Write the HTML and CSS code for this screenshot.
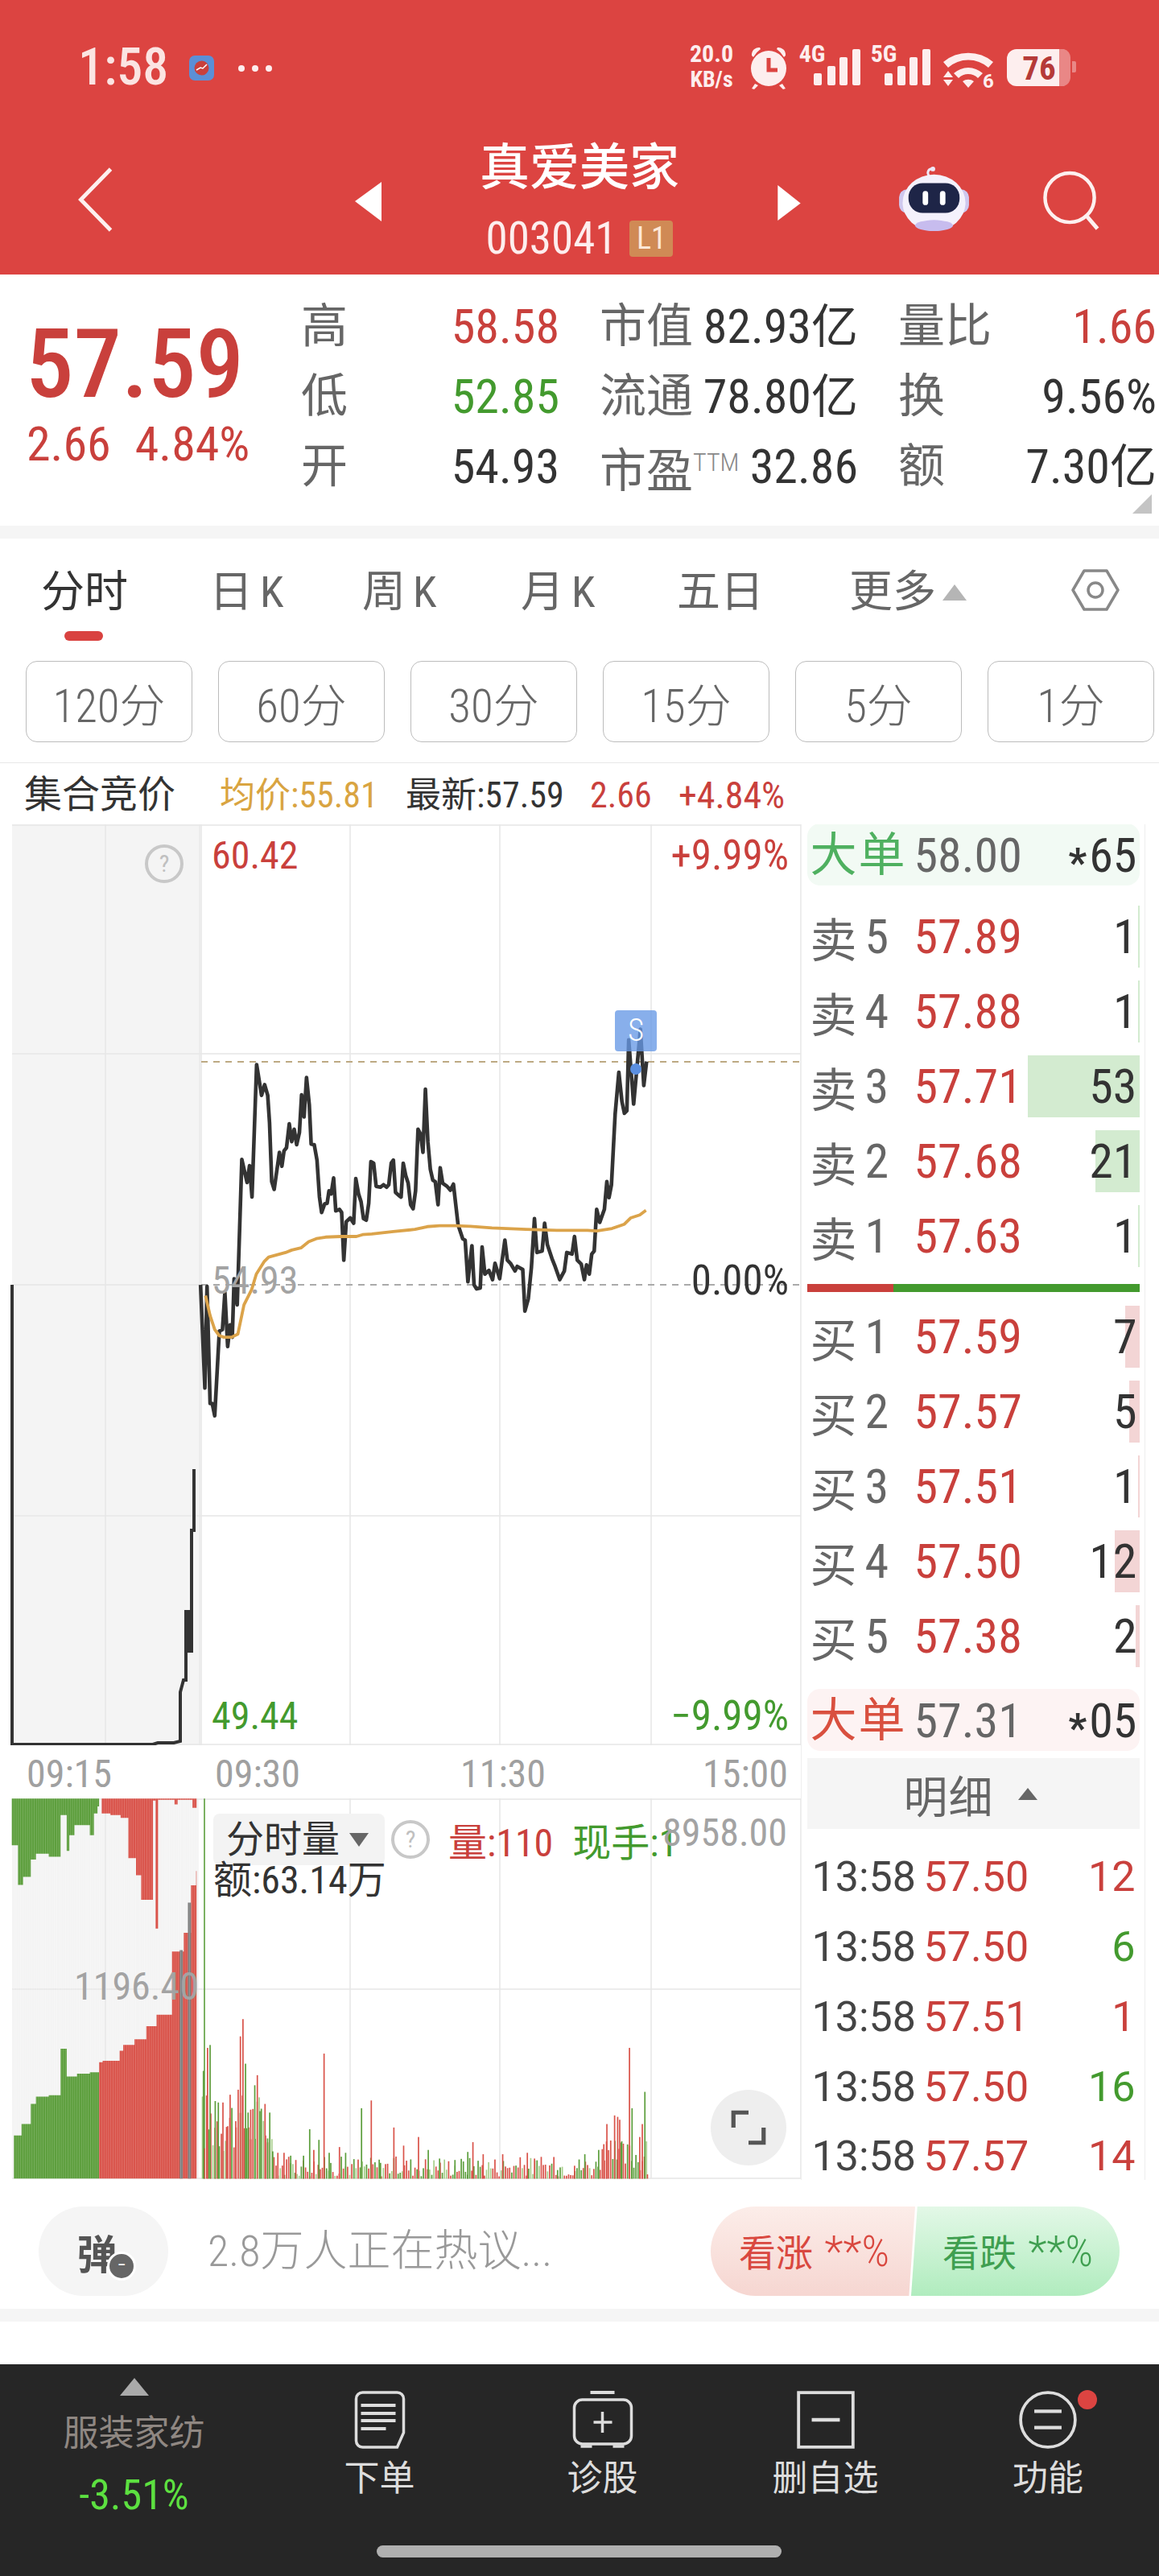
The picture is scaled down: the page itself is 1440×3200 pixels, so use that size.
FILE: index.html
```html
<!DOCTYPE html>
<html lang="zh-CN">
<head>
<meta charset="utf-8">
<title>真爱美家</title>
<link rel="stylesheet" href="styles.css">
</head>
<body>
<div class="page">
  <header class="top">
    <div class="status">
      <span class="clock">1:58</span>
      <svg class="app-dot" viewBox="0 0 31 31"><rect width="31" height="31" rx="7" fill="#5b8fd6"/><circle cx="15.5" cy="15.5" r="9" fill="#c9403c"/><path d="M9 18l5-3 3 1 5-5" stroke="#fff" fill="none" stroke-width="1.5"/></svg>
      <span class="more"><i></i><i></i><i></i></span>
      <svg class="status-icons" viewBox="850 50 490 66">
        <g fill="#fdeeee">
          <text x="884" y="77" class="st-a" text-anchor="middle">20.0</text>
          <text x="884" y="108" class="st-b" text-anchor="middle">KB/s</text>
          <circle cx="955" cy="85" r="22"/>
          <path d="M934 69a9 9 0 0 1 10-10l1 2a30 30 0 0 0-9 10zM976 69a9 9 0 0 0-10-10l-1 2a30 30 0 0 1 9 10z"/>
          <path d="M938 104l-4 6 3 1 5-5zM972 104l4 6-3 1-5-5z"/>
          <text x="1009" y="77" class="st-a" text-anchor="middle">4G</text>
          <rect x="1011" y="91" width="10" height="15" rx="2"/><rect x="1028" y="82" width="10" height="24" rx="2"/><rect x="1043" y="71" width="10" height="35" rx="2"/><rect x="1059" y="61" width="10" height="45" rx="2"/>
          <text x="1098" y="77" class="st-a" text-anchor="middle">5G</text>
          <rect x="1099" y="91" width="10" height="15" rx="2"/><rect x="1115" y="82" width="10" height="24" rx="2"/><rect x="1130" y="71" width="10" height="35" rx="2"/><rect x="1146" y="61" width="10" height="45" rx="2"/>
          <path d="M1172 77a48 48 0 0 1 62 0l-6 7a38 38 0 0 0-50 0zM1185 91a27 27 0 0 1 36 0l-6 6a17 17 0 0 0-24 0zM1196 101a12 12 0 0 1 14 0l-7 8z"/>
          <path d="M1178 88l6 8h-12zM1178 107l6-8h-12z"/>
          <text x="1228" y="109" class="st-d" text-anchor="middle">6</text>
          <path d="M1316 61h6a12 12 0 0 1 8 10v26a12 12 0 0 1-8 10h-6z" opacity=".4"/>
          <path d="M1332 76h3a2 2 0 0 1 2 2v10a2 2 0 0 1-2 2h-3z" opacity=".4"/>
          <path d="M1263 61h53v46h-53a12 12 0 0 1-12-12V73a12 12 0 0 1 12-12z"/>
        </g>
        <path d="M955 72v15h11" stroke="#dc4441" stroke-width="5" fill="none"/>
        <text x="1291" y="99" class="st-c" text-anchor="middle">76</text>
      </svg>
    </div>
    <nav class="navbar">
      <svg class="back" viewBox="0 0 44 82"><path d="M42 2L4 41l38 39" fill="none" stroke="#fdf0ef" stroke-width="5"/></svg>
      <svg class="tri tri-l" viewBox="0 0 33 49"><path d="M33 0v49L0 24z" fill="#fff"/></svg>
      <div class="title">
        <div class="name">真爱美家</div>
        <div class="code"><span>003041</span><b class="lvl">L1</b></div>
      </div>
      <svg class="tri tri-r" viewBox="0 0 29 45"><path d="M0 0v45l29-22z" fill="#fff"/></svg>
      <svg class="robot" viewBox="0 0 89 84">
        <path d="M39 14c-5-6-1-11 4-10" fill="none" stroke="#efe9f8" stroke-width="3"/>
        <circle cx="43" cy="4" r="3" fill="#efe9f8"/>
        <rect x="0" y="30" width="89" height="30" rx="10" fill="#cfc8ee"/>
        <ellipse cx="44.500" cy="47" rx="40" ry="36" fill="#f4f1fc"/>
        <ellipse cx="44.500" cy="76" rx="24" ry="7" fill="#c7bcee"/>
        <rect x="12" y="22" width="65" height="38" rx="18" fill="#1e2547"/>
        <rect x="30" y="32" width="7" height="18" rx="3.500" fill="#fff"/>
        <rect x="52" y="32" width="7" height="18" rx="3.500" fill="#fff"/>
      </svg>
      <svg class="search" viewBox="0 0 73 75"><circle cx="34" cy="34" r="31" fill="none" stroke="#fdf0ef" stroke-width="4.500"/><path d="M56 58l13 15" stroke="#fdf0ef" stroke-width="5"/></svg>
    </nav>
  </header>

  <section class="info">
    <div class="last">
      <div class="last-big">57.59</div>
      <div class="last-sub"><span>2.66</span><span>4.84%</span></div>
    </div>
    <div class="stats">
      <div class="cell"><span class="lab">高</span><span class="val red">58.58</span></div>
      <div class="cell"><span class="lab">市值</span><span class="val">82.93<i>亿</i></span></div>
      <div class="cell"><span class="lab">量比</span><span class="val red">1.66</span></div>
      <div class="cell"><span class="lab">低</span><span class="val green">52.85</span></div>
      <div class="cell"><span class="lab">流通</span><span class="val">78.80<i>亿</i></span></div>
      <div class="cell"><span class="lab">换</span><span class="val">9.56%</span></div>
      <div class="cell"><span class="lab">开</span><span class="val">54.93</span></div>
      <div class="cell"><span class="lab">市盈<small>TTM</small></span><span class="val">32.86</span></div>
      <div class="cell"><span class="lab">额</span><span class="val">7.30<i>亿</i></span></div>
    </div>
    <div class="corner"></div>
  </section>
  <div class="strip"></div>

  <section class="tabs">
    <div class="tab active">分时</div>
    <div class="tab tab-k">日K</div>
    <div class="tab tab-k">周K</div>
    <div class="tab tab-k">月K</div>
    <div class="tab">五日</div>
    <div class="tab">更多<em class="up"></em></div>
    <svg class="hex" viewBox="0 0 60 54"><path d="M16 3h28l14 24-14 24H16L2 27z" fill="none" stroke="#888" stroke-width="3.500" stroke-linejoin="round"/><circle cx="30" cy="27" r="9" fill="none" stroke="#888" stroke-width="3.500"/></svg>
  </section>

  <section class="periods">
    <div class="period">120分</div>
    <div class="period">60分</div>
    <div class="period">30分</div>
    <div class="period">15分</div>
    <div class="period">5分</div>
    <div class="period">1分</div>
  </section>

  <section class="quote">
    <span class="q-title">集合竞价</span>
    <span class="q-avg">均价:55.81</span>
    <span class="q-new">最新:57.59</span>
    <span class="red">2.66</span>
    <span class="red q-pct">+4.84%</span>
  </section>

  <section class="main">
    <div class="charts">
      <div class="price">
        <svg class="fill" viewBox="0 1024 995 1144">
          <rect x="15" y="1024" width="232" height="1144" fill="#f4f4f4"/>
          <rect x="247" y="1024" width="4" height="1144" fill="#ececec"/>
          <g stroke="#e6e6e6" stroke-width="1.500">
            <path d="M15 1025H995M15 1309H995M15 1883H995M15 2167H995"/>
            <path d="M15 1596H248"/>
            <path d="M131 1024V2168M435 1024V2168M621 1024V2168M809 1024V2168M995 1024V2168"/>
          </g>
          <path d="M250 1319H995" stroke="#bda983" stroke-width="2" stroke-dasharray="8 7"/>
          <path d="M250 1596H995" stroke="#aaa" stroke-width="2" stroke-dasharray="8 7"/>
          <path d="M15 1596V2167H190L196 2165H216L224 2163V2102L228 2087H231V2002H234V2051H235V2002H237V2051H238V1901H241V1825" fill="none" stroke="#333" stroke-width="4"/>
          <g transform="translate(240 1200) scale(.3827)" fill="none" stroke-linejoin="round">
            <polyline stroke="#333" stroke-width="12" points="24,1035 38,1370 45,1040 55,1420 62,1420 70,1460 85,1185 95,1180 103,1060 112,1235 120,1165 127,1205 133,1015 143,1100 158,628 175,703 183,648 191,750 206,320 222,420 232,385 242,420 248,510 255,700 263,725 280,605 288,650 295,600 303,590 312,512 320,570 328,530 336,580 345,540 352,418 360,490 368,362 377,450 383,578 393,580 402,630 410,750 417,800 427,772 435,770 441,730 448,740 456,688 463,795 475,790 482,800 489,955 497,830 510,818 521,835 528,690 537,740 545,765 553,820 562,825 570,770 577,635 586,640 594,715 608,718 618,710 628,718 635,710 643,640 650,630 657,735 668,745 675,750 682,640 690,680 698,705 706,775 714,788 722,730 730,530 738,545 746,605 754,400 762,570 770,660 778,695 786,700 795,775 802,655 810,705 824,715 835,728 845,708 852,770 860,840 875,885 883,890 892,1025 905,908 912,1035 920,1048 932,1045 938,912 947,1000 960,988 972,1018 980,965 995,1015 1012,890 1020,955 1030,965 1045,990 1052,975 1070,985 1077,1120 1088,1080 1098,980 1108,820 1116,930 1133,925 1141,835 1150,905 1165,950 1175,975 1190,1018 1205,990 1213,930 1230,935 1238,878 1247,955 1260,968 1270,1018 1277,970 1286,1000 1294,935 1302,925 1310,790 1320,832 1335,790 1343,700 1350,752 1358,710 1370,480 1382,345 1392,440 1400,478 1408,470 1414,240 1430,448 1452,205 1463,388 1472,310"/>
            <polyline stroke="#dba34a" stroke-width="10" points="40,1070 55,1135 70,1180 85,1200 100,1205 125,1205 145,1195 165,1100 190,1050 205,1000 230,960 245,945 300,930 320,922 350,915 375,895 400,885 430,880 480,878 530,878 550,872 580,870 650,862 720,855 760,846 800,843 850,843 900,845 970,850 1080,855 1180,858 1280,858 1310,860 1360,852 1400,838 1420,818 1450,808 1470,793"/>
          </g>
          <circle cx="790" cy="1328" r="7" fill="#5b8fe0"/>
        </svg>
        <span class="mark">S</span>
        <span class="help help-a">?</span>
        <span class="lbl l-high red">60.42</span>
        <span class="lbl r-high red">+9.99%</span>
        <span class="lbl l-mid grey">54.93</span>
        <span class="lbl r-mid">0.00%</span>
        <span class="lbl l-low green">49.44</span>
        <span class="lbl r-low green">−9.99%</span>
      </div>
      <div class="axis"><span>09:15</span><span>09:30</span><span>11:30</span><span>15:00</span></div>
      <div class="volume">
        <svg class="fill" id="volsvg" viewBox="0 2234 995 474">
          <defs>
            <pattern id="stripes" width="2.800" height="10" patternUnits="userSpaceOnUse"><rect width=".8" height="10" fill="#fff" opacity=".2"/></pattern>
          </defs>
          <rect x="15" y="2234" width="232" height="472" fill="#f4f4f4"/>
          <g stroke="#e6e6e6" stroke-width="1.500">
            <path d="M15 2235H995M15 2471H995M15 2706H995"/>
            <path d="M131 2234V2706M435 2234V2706M621 2234V2706M809 2234V2706M995 2234V2706"/>
          </g>
          <g transform="translate(0 2160) scale(.6378 .3571)">
            <path fill="#5c9e3c" d="M23 208V370H35V508H45V480H60V420H70V400H95V410H118V265H130V390H135V335H145V300H175V335H183V260H190V235H193V208ZM27 1530V1380H42V1340H60V1270H70V1245H95V1240H118V1078H130V1175H150V1165H175V1160H193V1530Z"/>
            <path fill="#d9534a" d="M198 208V260H215V265H235V275H250V415H265V475H275V560H298V215H303V660H308V212H340V228H346V212H375V240H383V208ZM193 1530V1125H200V1120H233V1085H240V1065H262V1045H285V1000H305V960H335V740H358V675H372V510H382V460H383V1530Z"/>
            <path fill="#808080" d="M350 1530V735H356V1530ZM366 1530V570H372V1530Z"/>
            <rect x="397" y="208" width="2.500" height="1322" fill="#5c9e3c"/>
          </g>
          <rect x="15" y="2234" width="232" height="472" fill="url(#stripes)"/>
        </svg>
        <div class="vol-head">
          <span class="vol-tag">分时量<em class="down"></em></span>
          <span class="help help-b">?</span>
          <span class="vol-n red">量:110</span>
          <span class="vol-h green">现手:1</span>
        </div>
        <span class="vol-amt">额:63.14万</span>
        <span class="lbl v-max grey">8958.00</span>
        <span class="lbl v-mid grey">1196.40</span>
        <span class="expand"><svg viewBox="0 0 48 48"><path d="M6 24V6h18M42 24v18H24" fill="none" stroke="#555" stroke-width="5"/></svg></span>
      </div>
    </div>
    <aside class="book">
      <div class="big big-g"><span class="big-l">大单</span><span class="big-p">58.00</span><span class="big-q"><i class="ast">*</i>65</span></div>
      <div class="rows">
        <div class="row"><i class="bar sell" style="width:2px"></i><span class="r-l">卖<b>5</b></span><span class="r-p">57.89</span><span class="r-q">1</span></div>
        <div class="row"><i class="bar sell" style="width:2px"></i><span class="r-l">卖<b>4</b></span><span class="r-p">57.88</span><span class="r-q">1</span></div>
        <div class="row"><i class="bar sell" style="width:139px"></i><span class="r-l">卖<b>3</b></span><span class="r-p">57.71</span><span class="r-q">53</span></div>
        <div class="row"><i class="bar sell" style="width:55px"></i><span class="r-l">卖<b>2</b></span><span class="r-p">57.68</span><span class="r-q">21</span></div>
        <div class="row"><i class="bar sell" style="width:2px"></i><span class="r-l">卖<b>1</b></span><span class="r-p">57.63</span><span class="r-q">1</span></div>
      </div>
      <div class="ratio"><i></i></div>
      <div class="rows">
        <div class="row"><i class="bar buy" style="width:18px"></i><span class="r-l">买<b>1</b></span><span class="r-p">57.59</span><span class="r-q">7</span></div>
        <div class="row"><i class="bar buy" style="width:13px"></i><span class="r-l">买<b>2</b></span><span class="r-p">57.57</span><span class="r-q">5</span></div>
        <div class="row"><i class="bar buy" style="width:2px"></i><span class="r-l">买<b>3</b></span><span class="r-p">57.51</span><span class="r-q">1</span></div>
        <div class="row"><i class="bar buy" style="width:31px"></i><span class="r-l">买<b>4</b></span><span class="r-p">57.50</span><span class="r-q">12</span></div>
        <div class="row"><i class="bar buy" style="width:5px"></i><span class="r-l">买<b>5</b></span><span class="r-p">57.38</span><span class="r-q">2</span></div>
      </div>
      <div class="big big-r"><span class="big-l">大单</span><span class="big-p">57.31</span><span class="big-q"><i class="ast">*</i>05</span></div>
      <div class="detail">明细<em class="up"></em></div>
      <div class="ticks">
        <div class="tick"><span class="t-t">13:58</span><span class="t-p">57.50</span><span class="t-q red">12</span></div>
        <div class="tick"><span class="t-t">13:58</span><span class="t-p">57.50</span><span class="t-q green">6</span></div>
        <div class="tick"><span class="t-t">13:58</span><span class="t-p">57.51</span><span class="t-q red">1</span></div>
        <div class="tick"><span class="t-t">13:58</span><span class="t-p">57.50</span><span class="t-q green">16</span></div>
        <div class="tick"><span class="t-t">13:58</span><span class="t-p">57.57</span><span class="t-q red">14</span></div>
      </div>
    </aside>
  </section>

  <section class="social">
    <div class="danmu"><span>弹</span><em>−</em></div>
    <div class="hot">2.8万人正在热议...</div>
    <div class="vote">
      <span class="v-up">看涨 <i>**%</i></span>
      <span class="v-down">看跌 <i>**%</i></span>
    </div>
  </section>
  <div class="strip"></div>
  <div class="gap"></div>

  <footer class="bottom">
    <div class="sector">
      <em class="up"></em>
      <span class="s-name">服装家纺</span>
      <span class="s-chg">-3.51%</span>
    </div>
    <div class="act">
      <svg viewBox="0 0 63 72"><path d="M10 2h43a8 8 0 0 1 8 8v42l-8 18H10a8 8 0 0 1-8-8V10a8 8 0 0 1 8-8z" fill="none" stroke="#ddd" stroke-width="3.500"/><path d="M8 18h43M8 28h43M8 37h43M8 47h31" stroke="#ddd" stroke-width="4"/></svg>
      <span>下单</span>
    </div>
    <div class="act">
      <svg viewBox="0 0 75 72"><path d="M22 2h30" stroke="#ddd" stroke-width="4"/><rect x="2" y="11" width="71" height="55" rx="10" fill="none" stroke="#ddd" stroke-width="3.500"/><path d="M37 26v26M26 39h23M10 69h14M50 69h14" stroke="#ddd" stroke-width="3.500"/></svg>
      <span>诊股</span>
    </div>
    <div class="act">
      <svg viewBox="0 0 66 66"><rect x="2" y="2" width="62" height="62" fill="none" stroke="#ddd" stroke-width="3.500"/><path d="M17 33h32" stroke="#ddd" stroke-width="4"/></svg>
      <span>删自选</span>
    </div>
    <div class="act act-fn">
      <svg viewBox="0 0 68 68"><circle cx="34" cy="34" r="32" fill="none" stroke="#ddd" stroke-width="3.500"/><path d="M18 24h32M18 43h32" stroke="#ddd" stroke-width="4"/></svg>
      <span>功能</span>
      <i class="badge"></i>
    </div>
    <div class="home"></div>
  </footer>
</div>
<script src="chart.js"></script>
</body>
</html>
```
FILE: styles.css
```css
* { box-sizing: border-box; }
html, body { margin: 0; padding: 0; background: #fff; }
body { font-family: Roboto, "Noto Sans CJK SC", sans-serif; font-stretch: 85%; color: #333; }
.page { width: 1440px; height: 3200px; overflow: hidden; display: flex; flex-direction: column; }
em, i { font-style: normal; }
.red { color: #c9403c; }
.green { color: #439a2e; }
.grey { color: #a3a3a3; }

/* header */
.top { height: 341px; background: #dc4441; color: #fdeeee; flex: none; }
.status { height: 128px; display: flex; align-items: flex-start; padding-left: 97px; position: relative; }
.clock { font-size: 64px; font-weight: 500; width: 138px; line-height: 64px; margin-top: 52px; color: #fbe4e2; }
.app-dot { width: 31px; height: 31px; margin-top: 69px; }
.more { display: flex; gap: 9px; margin: 81px 0 0 30px; }
.more i { width: 8px; height: 8px; border-radius: 50%; background: #fdeeee; }
.status-icons { width: 490px; height: 66px; margin: 50px 100px 0 auto; }
.st-a { font: 700 30px Roboto, sans-serif; font-stretch: 85%; }
.st-b { font: 700 28px Roboto, sans-serif; font-stretch: 85%; }
.st-d { font: 700 24px Roboto, sans-serif; }
.st-c { font: 700 41px Roboto, sans-serif; font-stretch: 80%; fill: #b53a38; }
.navbar { height: 213px; position: relative; display: flex; justify-content: center; }
.back { position: absolute; left: 96px; top: 80px; width: 44px; height: 80px; }
.tri { position: absolute; }
.tri-l { left: 441px; top: 98px; width: 33px; height: 49px; }
.tri-r { left: 966px; top: 102px; width: 29px; height: 44px; }
.robot { position: absolute; left: 1116px; top: 78px; width: 89px; height: 82px; }
.search { position: absolute; left: 1295px; top: 84px; width: 73px; height: 74px; }
.title { text-align: center; padding-top: 41px; }
.name { font-size: 62px; font-weight: 500; line-height: 80px; color: #fff; }
.code { display: flex; align-items: center; justify-content: center; font-size: 55px; line-height: 45px; margin-top: 25px; gap: 16px; }
.lvl { background: #d08a55; color: #fde8d8; font-size: 38px; font-weight: 400; width: 54px; height: 45px; line-height: 45px; border-radius: 4px; text-align: center; }

/* info */
.info { height: 312px; display: flex; position: relative; flex: none; }
.last { width: 374px; padding-left: 32px; color: #c9403c; flex: none; }
.last-big { font-size: 119px; font-weight: 500; line-height: 120px; margin-top: 52px; }
.last-sub { font-size: 60px; line-height: 60px; margin: 9px 0 0 1px; display: flex; gap: 30px; }
.stats { display: grid; grid-template-columns: 321px 321px 321px; column-gap: 50px; grid-auto-rows: 87px; padding-top: 21px; }
.cell { display: flex; justify-content: space-between; align-items: center; }
.lab { font-size: 58px; line-height: 87px; color: #666; font-weight: 400; }
.lab small { font-size: 32px; font-weight: 300; vertical-align: 20px; color: #888; }
.val { font-size: 60px; font-weight: 450; line-height: 87px; }
.val i { font-size: 58px; font-weight: 400; }
.corner { position: absolute; left: 1407px; top: 273px; border-style: solid; border-width: 0 0 24px 24px; border-color: transparent transparent #c4c4c4 transparent; }
.strip { height: 16px; background: #f5f5f5; flex: none; }

/* tabs */
.tabs { height: 152px; flex: none; display: grid; grid-template-columns: 209px 190px 197px 194px 214px 276px 60px; padding-left: 51px; align-items: start; padding-top: 35px; position: relative; }
.tab { font-size: 54px; line-height: 64px; color: #666; position: relative; white-space: nowrap; }
.tab-k { letter-spacing: 9px; }
.tab.active { color: #333; }
.tab.active::after { content: ""; position: absolute; left: 29px; top: 80px; width: 48px; height: 12px; border-radius: 6px; background: #d94240; }
.up { display: inline-block; width: 0; height: 0; border-style: solid; border-width: 0 15px 20px; border-color: transparent transparent #b5b5b5; margin-left: 8px; vertical-align: 8px; }
.hex { width: 60px; height: 54px; margin-top: 2px; }

.periods { display: flex; gap: 32px; padding-left: 32px; flex: none; height: 127px; border-bottom: 1.500px solid #e8e8e8; }
.period { width: 207px; height: 101px; border: 1.500px solid #bcbcbc; border-radius: 14px; font-size: 57px; font-weight: 300; color: #666; display: flex; align-items: center; justify-content: center; flex: none; }

.quote { height: 76px; flex: none; display: grid; grid-template-columns: 243px 231px 229px 110px auto; padding-left: 30px; align-items: center; font-size: 44px; line-height: 76px; white-space: nowrap; }
.q-title { font-size: 47px; }
.q-avg { color: #d9a441; }
.q-pct { font-size: 46px; }
.quote > span:not(.q-title) { padding-top: 2px; }

/* main */
.main { height: 1684px; flex: none; display: flex; }
.charts { width: 995px; flex: none; display: flex; flex-direction: column; }
.price { height: 1144px; position: relative; flex: none; }
.volume { height: 474px; position: relative; flex: none; }
.fill { position: absolute; inset: 0; width: 100%; height: 100%; display: block; }
.lbl { position: absolute; font-size: 48px; line-height: 50px; white-space: nowrap; }
.l-high, .l-mid, .l-low { left: 263px; }
.r-high, .r-mid, .r-low { right: 15px; font-size: 51px; }
.l-high, .r-high { top: 14px; }
.l-mid, .r-mid { top: 542px; }
.l-low, .r-low { top: 1083px; }
.mark { position: absolute; left: 764px; top: 231px; width: 52px; height: 51px; border-radius: 4px; background: rgba(102, 153, 230, .78); color: #fff; font-size: 38px; text-align: center; line-height: 51px; font-weight: 300; }
.help { position: absolute; width: 48px; height: 48px; border: 4px solid #c8c8c8; border-radius: 50%; color: #c0c0c0; font-size: 30px; line-height: 40px; text-align: center; }
.help-a { left: 180px; top: 25px; }
.help-b { position: static; flex: none; margin-left: 8px; }
.axis { height: 66px; flex: none; display: grid; grid-template-columns: 234px 305px 301px auto; padding-left: 33px; font-size: 48px; line-height: 72px; color: #a0a0a0; }
.vol-head { position: absolute; left: 265px; top: 16px; display: flex; align-items: center; white-space: nowrap; }
.vol-tag { width: 213px; height: 64px; background: #f3f3f3; border-radius: 8px; font-size: 47px; line-height: 64px; padding-left: 16px; display: flex; align-items: center; color: #333; }
.down { display: inline-block; width: 0; height: 0; border-style: solid; border-width: 17px 12px 0; border-color: #666 transparent transparent; margin-left: 12px; }
.vol-n { font-size: 48px; margin-left: 23px; }
.vol-h { font-size: 48px; margin-left: 24px; }
.vol-amt { position: absolute; left: 265px; top: 78px; font-size: 48px; line-height: 48px; color: #333; }
.v-max { right: 17px; top: 18px; }
.v-mid { left: 92px; top: 209px; }
.expand { position: absolute; left: 883px; top: 362px; width: 94px; height: 94px; border-radius: 50%; background: #eee; display: flex; align-items: center; justify-content: center; }
.expand svg { width: 50px; height: 50px; }

/* book */
.book { width: 428px; flex: none; border-left: 1.500px solid #eee; border-right: 1.500px solid #eee; padding: 0 6.500px; height: 1684px; overflow: hidden; }
.big { height: 77px; border-radius: 16px; display: flex; align-items: center; padding: 0 3px 0 4px; margin-top: -1px; }
.big-g { background: #f2faf4; }
.big-r { background: #fdf3f3; margin-top: 27px; }
.big-l { font-size: 58px; line-height: 77px; width: 129px; letter-spacing: 2px; padding-top: 2px; }
.big-g .big-l { color: #4fb060; }
.big-r .big-l { color: #d9503f; }
.big-p { font-size: 60px; color: #666; padding-top: 2px; }
.big-q { margin-left: auto; font-size: 60px; padding-top: 2px; display: flex; align-items: center; }
.ast { font-weight: 700; font-size: 50px; position: relative; top: 9px; margin-right: 3px; }
.rows { display: flex; flex-direction: column; gap: 16px; margin-top: 25px; }
.ratio + .rows { margin-top: 17px; }
.row { height: 77px; display: flex; align-items: center; position: relative; padding: 0 3px 0 4px; }
.bar { position: absolute; right: 0; top: 0; bottom: 0; }
.sell { background: #d3ebd0; }
.buy { background: #f3d5d5; }
.r-l { font-size: 58px; width: 129px; color: #666; position: relative; display: flex; align-items: center; white-space: nowrap; }
.r-l b { font-size: 60px; font-weight: 400; margin-left: 10px; }
.r-p { font-size: 60px; color: #c9403c; font-weight: 450; position: relative; }
.r-q { margin-left: auto; font-size: 60px; position: relative; font-weight: 450; }
.ratio { height: 10px; margin-top: 21px; background: #439a2e; }
.ratio i { display: block; width: 107px; height: 100%; background: #c9403c; }
.detail { height: 88px; margin-top: 9px; background: #f5f5f5; color: #666; display: flex; align-items: center; font-size: 55px; padding-left: 120px; letter-spacing: 1px; }
.detail .up { border-width: 0 12px 15px; border-color: transparent transparent #666; margin-left: 30px; vertical-align: 0; }
.ticks { padding-top: 16px; }
.tick { height: 87px; display: flex; align-items: center; padding: 0 5px 0 6px; font-size: 52px; font-stretch: 90%; line-height: 58px; }
.tick:last-child { height: 72px; align-items: flex-start; padding-top: 14px; }
.t-t { width: 139px; color: #444; font-weight: 450; }
.t-p { color: #c9403c; font-weight: 450; }
.t-q { margin-left: auto; font-weight: 450; }

/* social */
.social { height: 160px; flex: none; position: relative; display: flex; align-items: flex-start; padding: 33px 49px 0 48px; }
.danmu { width: 161px; height: 111px; border-radius: 56px; background: #f5f5f5; position: relative; display: flex; align-items: center; justify-content: center; font-size: 50px; font-weight: 700; color: #555; padding-right: 16px; }
.danmu em { position: absolute; left: 85px; top: 56px; width: 30px; height: 30px; border-radius: 50%; background: #666; border: 3px solid #fff; box-sizing: content-box; color: #fff; font-size: 22px; font-weight: 400; line-height: 28px; text-align: center; }
.hot { font-size: 54px; color: #999; line-height: 111px; margin-left: 49px; font-weight: 300; }
.vote { margin-left: auto; width: 508px; height: 111px; border-radius: 56px; overflow: hidden; position: relative; display: flex; font-size: 46px; line-height: 111px; }
.vote i { font-size: 54px; margin-left: 4px; font-weight: 300; }
.v-up { width: 254px; background: linear-gradient(#fcede9, #f6d6d1); color: #d9483f; padding-left: 35px; clip-path: polygon(0 0, 100% 0, 97% 100%, 0 100%); white-space: nowrap; }
.v-down { position: absolute; left: 249px; right: 0; top: 0; bottom: 0; background: linear-gradient(#e3f8e7, #b0ecbe); color: #3f9f50; padding-left: 39px; clip-path: polygon(3% 0, 100% 0, 100% 100%, 0 100%); white-space: nowrap; }
.gap { height: 53px; flex: none; }

/* bottom */
.bottom { height: 263px; flex: none; background: #262626; position: relative; display: grid; grid-template-columns: 333px 277px 277px 277px 276px; align-items: start; }
.sector { display: flex; flex-direction: column; align-items: center; }
.sector .up { border-width: 0 18px 22px; border-color: transparent transparent #aaa; margin: 17px 0 0; }
.s-name { font-size: 44px; line-height: 50px; color: #8f8782; margin-top: 22px; }
.s-chg { font-size: 52px; line-height: 50px; color: #5ce040; margin-top: 27px; }
.act { display: flex; flex-direction: column; align-items: center; position: relative; color: #ddd; font-size: 44px; padding-top: 33px; }
.act svg { height: 72px; width: 76px; }
.act span { line-height: 50px; margin-top: 12px; }
.badge { position: absolute; left: 175px; top: 32px; width: 24px; height: 24px; border-radius: 50%; background: #dc4441; }
.home { position: absolute; left: 468px; top: 225px; width: 503px; height: 15px; border-radius: 8px; background: #b0b0b0; }
```
FILE: chart.js
```js
(function () {
  var svg = document.getElementById('volsvg');
  var NS = 'http://www.w3.org/2000/svg';
  var RED = '#d9534a', GREEN = '#5c9e3c', LIGHT = '#a8cf8c';
  // zoom-space spikes: [x, top y, colour]
  var spikes = [[395,1155,GREEN],[403,1075,RED],[408,1065,GREEN],[418,1260,GREEN],[424,1265,GREEN],[433,1265,RED],[440,1350,RED],[447,1238,RED],[458,1330,RED],[467,1035,RED],[472,975,RED],[477,1130,GREEN],[482,1300,GREEN],[487,1290,RED],[495,1205,GREEN],[500,1170,RED],[505,1295,GREEN],[515,1270,RED],[520,1390,GREEN],[530,1435,GREEN],[540,1440,RED],[552,1440,RED],[565,1450,GREEN],[575,1465,RED],[590,1450,GREEN],[602,1358,GREEN],[610,1430,RED],[620,1395,GREEN],[630,1095,RED],[640,1440,GREEN],[660,1420,RED],[672,1440,GREEN],[703,1285,GREEN],[722,1258,RED],[740,1475,GREEN],[766,1352,RED],[785,1415,RED],[814,1385,RED],[833,1430,GREEN],[855,1460,GREEN],[885,1465,GREEN],[910,1437,GREEN],[920,1403,RED],[940,1445,RED],[978,1445,RED],[1026,1440,RED],[1040,1460,RED],[1085,1500,GREEN],[1118,1485,RED],[1138,1445,GREEN],[1165,1430,GREEN],[1175,1410,RED],[1181,1340,RED],[1196,1310,RED],[1202,1315,RED],[1206,1325,RED],[1210,1400,GREEN],[1225,1075,RED],[1230,1285,GREEN],[1245,1385,RED],[1250,1340,RED],[1255,1228,GREEN],[1260,1515,RED]];
  var seed = 17;
  function rnd() { seed = (seed * 9301 + 49297) % 233280; return seed / 233280; }
  function bar(x, top, colour) {
    var r = document.createElementNS(NS, 'rect');
    r.setAttribute('x', (x / 1.568).toFixed(2));
    r.setAttribute('y', (2160 + top / 2.8).toFixed(2));
    r.setAttribute('width', '1.7');
    r.setAttribute('height', ((1530 - top) / 2.8).toFixed(2));
    r.setAttribute('fill', colour);
    svg.appendChild(r);
  }
  for (var x = 393; x < 1262; x += 4.1) {
    var early = x < 530;
    var depth = early ? 90 + rnd() * 220 : (x < 1160 ? 8 + rnd() * 70 : 25 + rnd() * 110);
    var pick = rnd();
    bar(x, 1530 - depth, pick < .45 ? RED : (pick < .8 ? GREEN : LIGHT));
  }
  spikes.forEach(function (s) { bar(s[0], s[1], s[2]); });
})();
```
